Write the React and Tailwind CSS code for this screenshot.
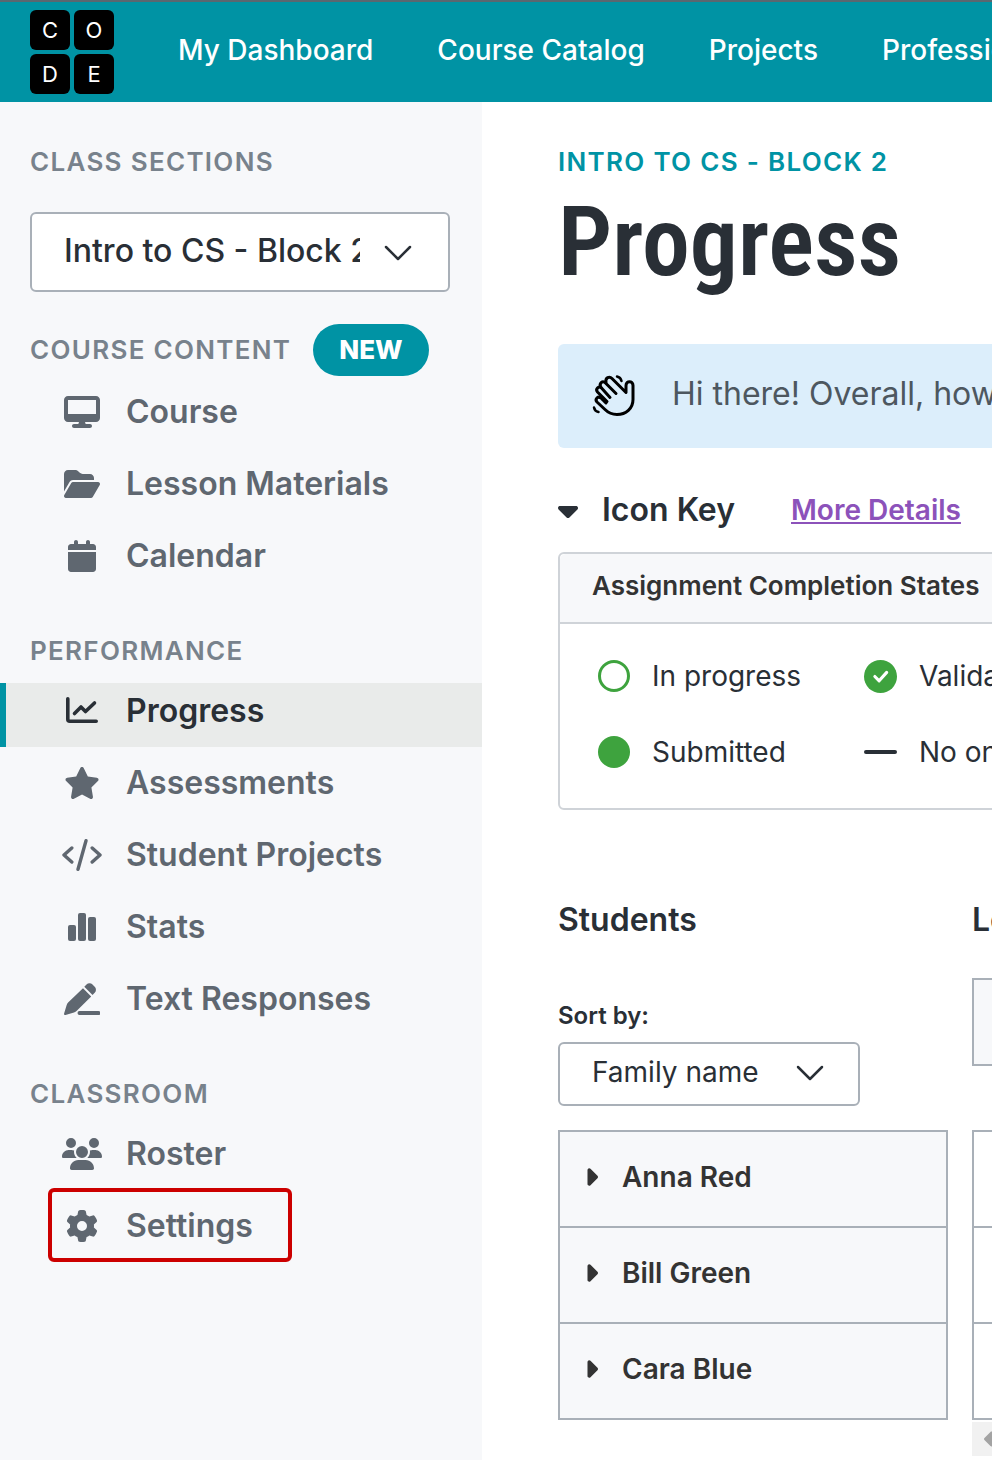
import React from 'react';
import { FaDesktop, FaFolderOpen, FaCalendar, FaStar, FaUsers, FaGear, FaCaretDown, FaCaretRight, FaCaretLeft } from 'react-icons/fa6';

const ChartLineIcon = () => (
  <svg width="32" height="32" viewBox="0 0 32 32" fill="none" stroke="currentColor" strokeWidth="3.6" strokeLinecap="round" strokeLinejoin="round">
    <path d="M1.800 3.800v20.500a2 2 0 0 0 2 2h26.400" />
    <path d="M8.500 18.500l6.500-6.500 4.500 4.500 9-8.500" />
  </svg>
);

const CodeIcon = () => (
  <svg width="40" height="32" viewBox="0 0 40 32" fill="none" stroke="currentColor" strokeWidth="3.4" strokeLinecap="round" strokeLinejoin="round">
    <path d="M9.800 9L2 16l7.800 7M30.200 9L38 16l-7.800 7M24 1.700l-8 28.600" />
  </svg>
);

const StatsIcon = () => (
  <svg width="28" height="28" viewBox="0 0 28 28" fill="currentColor">
    <rect x="0" y="12" width="8" height="16" rx="2" />
    <rect x="10" y="0" width="8" height="28" rx="2" />
    <rect x="20" y="4" width="8" height="24" rx="2" />
  </svg>
);

const PenLineIcon = () => (
  <svg width="36" height="32" viewBox="0 0 36 32" fill="currentColor">
    <path d="M22.500 1.500a4.200 4.200 0 0 1 6 0l2.200 2.200a4.200 4.200 0 0 1 0 6L28.500 12l-8.200-8.200zM19 5.200l8.200 8.200-14.400 14.400a6 6 0 0 1-2.800 1.600L1.500 32A1.300 1.300 0 0 1 .1 30.400l2.500-8.200a6 6 0 0 1 1.500-2.700zM15.500 28H34.500a2 2 0 0 1 0 4H15.500a2 2 0 0 1 0-4z" />
  </svg>
);

const ChevronIcon = () => (
  <svg width="28" height="28" viewBox="0 0 28 28" fill="none" stroke="#292f36" strokeWidth="2.500" strokeLinecap="round" strokeLinejoin="round">
    <path d="M2 9l12 12 12-12" />
  </svg>
);

const WaveIcon = () => (
  <svg width="44" height="44" viewBox="0 -1.500 44 44" fill="none" stroke="#000" strokeWidth="3" strokeLinecap="round" strokeLinejoin="round">
    <path d="M15 28L5.500 18.500c-2.500-3 1.500-6.500 4-4L18 24" />
    <path d="M9 14c-2.500-4 1.500-7.500 4.500-4.500L24 20" />
    <path d="M14 9c-1-5 3.500-6.500 6-4l14 14v-7c0-5 7-5 7 0v14c0 9-7 15-16 15-5 0-9-2-12-5l-8-7.500c-2.500-2.800 1-6.500 4-4l5 5" />
    <path d="M25 3c2.500.5 4 2 4.500 4.500M2 34c.5 2.500 2 4 4.500 4.500" strokeWidth="2.500" />
  </svg>
);

const groups = [
  {
    title: 'Course Content',
    isNew: true,
    items: [
      { label: 'Course', icon: <FaDesktop className="h-8 w-9" /> },
      { label: 'Lesson Materials', icon: <FaFolderOpen className="h-8 w-9" /> },
      { label: 'Calendar', icon: <FaCalendar className="h-8 w-7" /> },
    ],
  },
  {
    title: 'Performance',
    items: [
      { label: 'Progress', icon: <ChartLineIcon />, active: true },
      { label: 'Assessments', icon: <FaStar className="h-8 w-9" /> },
      { label: 'Student Projects', icon: <CodeIcon /> },
      { label: 'Stats', icon: <StatsIcon /> },
      { label: 'Text Responses', icon: <PenLineIcon /> },
    ],
  },
  {
    title: 'Classroom',
    items: [
      { label: 'Roster', icon: <FaUsers className="h-8 w-10" /> },
      { label: 'Settings', icon: <FaGear className="h-8 w-8" />, marked: true },
    ],
  },
];

const students = ['Anna Red', 'Bill Green', 'Cara Blue'];

function Logo() {
  return (
    <a href="#" aria-label="Code" className="grid shrink-0 grid-cols-2 gap-1 text-[22px] leading-10 text-white">
      {['C', 'O', 'D', 'E'].map((letter) => (
        <span key={letter} className="h-10 w-10 rounded-md bg-black text-center">{letter}</span>
      ))}
    </a>
  );
}

function Header() {
  return (
    <header className="flex h-[102px] items-center overflow-hidden border-t-2 border-[#5b6770] bg-[#0093a4] pl-[30px]">
      <Logo />
      <nav className="flex gap-16 pb-1 pl-16 text-[28px] leading-9 font-medium whitespace-nowrap text-white">
        <a href="#">My Dashboard</a>
        <a href="#">Course Catalog</a>
        <a href="#">Projects</a>
        <a href="#">Professional Learning</a>
      </nav>
    </header>
  );
}

function NavItem({ item }) {
  return (
    <li className="relative">
      <a
        href="#"
        className={
          item.active
            ? 'flex h-16 items-center gap-6 border-l-[6px] border-[#0093a4] bg-[#e9ebea] pb-2 pl-14 text-[#292f36]'
            : 'flex h-16 items-center gap-6 pb-2 pl-[62px]'
        }
      >
        <span className="flex w-10 justify-center">{item.icon}</span>
        {item.label}
      </a>
      {item.marked && (
        <span className="pointer-events-none absolute -top-2.5 left-12 h-[74px] w-[244px] rounded-md border-4 border-[#c00]" />
      )}
    </li>
  );
}

function Sidebar() {
  return (
    <aside className="w-[482px] shrink-0 bg-[#f7f8fa] pt-11 pb-[198px]">
      <label htmlFor="section" className="block px-[30px] text-[26px] leading-8 font-semibold tracking-wider text-[#78828c] uppercase">
        Class Sections
      </label>
      <div className="mx-[30px] mt-[34px] mb-8 grid w-[420px] items-center">
        <select
          id="section"
          className="col-start-1 row-start-1 h-20 w-full appearance-none rounded-md border-2 border-[#a9b0b8] bg-white pr-[88px] pb-0.5 pl-8 text-[32px] font-medium text-[#292f36]"
        >
          <option>Intro to CS - Block 2</option>
        </select>
        <span className="pointer-events-none col-start-1 row-start-1 justify-self-end pr-[38px]"><ChevronIcon /></span>
      </div>
      {groups.map((group) => (
        <section key={group.title}>
          <div className={group.isNew ? 'mb-2 flex items-center gap-[22px] px-[30px]' : 'mt-[43px] mb-4 px-[30px]'}>
            <h2 className="text-[26px] leading-8 font-semibold tracking-wider text-[#78828c] uppercase">{group.title}</h2>
            {group.isNew && (
              <span className="rounded-full bg-[#0093a4] px-[26px] text-[26px] leading-[52px] font-extrabold text-white">NEW</span>
            )}
          </div>
          <ul className="flex flex-col gap-2 text-[32px] leading-9 font-semibold text-[#5f6770]">
            {group.items.map((item) => (
              <NavItem key={item.label} item={item} />
            ))}
          </ul>
        </section>
      ))}
    </aside>
  );
}

function IconKey() {
  return (
    <section className="mt-10">
      <div className="flex h-11 items-center">
        <button className="flex items-center gap-6 text-[32px] leading-9 font-semibold">
          <FaCaretDown className="h-8 w-5" />
          Icon Key
        </button>
        <a href="#" className="ml-14 text-[28px] leading-9 font-semibold text-[#8c52ba] underline">More Details</a>
      </div>
      <div className="mt-5 w-[1300px] rounded-md border-2 border-[#cfd3d8]">
        <h3 className="rounded-t-md border-b-2 border-[#cfd3d8] bg-[#f7f8fa] px-8 pt-[14px] pb-[18px] text-[26px] leading-9 font-semibold text-[#333]">
          Assignment Completion States
        </h3>
        <ul className="grid grid-cols-[266px_500px] gap-y-10 px-[38px] pt-[34px] pb-[38px] text-[28px] leading-9">
          <li className="flex items-center gap-[22px]">
            <span className="h-8 w-8 rounded-full border-[3px] border-[#3ea33e]" />
            In progress
          </li>
          <li className="flex items-center gap-[22px]">
            <svg width="33" height="33" viewBox="0 0 32 32" fill="none">
              <circle cx="16" cy="16" r="16" fill="#3ea33e" />
              <path d="M10.500 16l4.200 4.200L22 12" stroke="#fff" strokeWidth="3" strokeLinecap="round" strokeLinejoin="round" />
            </svg>
            Validated
          </li>
          <li className="flex items-center gap-[22px]">
            <span className="h-8 w-8 rounded-full bg-[#3ea33e]" />
            Submitted
          </li>
          <li className="flex items-center gap-[22px]">
            <span className="h-1 w-[33px] rounded-full bg-[#292f36]" />
            No online work
          </li>
        </ul>
      </div>
    </section>
  );
}

function StudentTable() {
  return (
    <section className="mt-[90px] flex gap-6">
      <div className="w-[390px] shrink-0">
        <h2 className="text-[32px] leading-10 font-semibold">Students</h2>
        <label htmlFor="sort" className="mt-[60px] block text-[24px] leading-8 font-semibold">Sort by:</label>
        <div className="mt-2.5 mb-6 grid w-[302px] items-center">
          <select
            id="sort"
            className="col-start-1 row-start-1 h-16 w-full appearance-none rounded-md border-2 border-[#a9b0b8] bg-white pb-1 pl-8 text-[28px]"
          >
            <option>Family name</option>
          </select>
          <span className="pointer-events-none col-start-1 row-start-1 justify-self-end pr-9 pb-1"><ChevronIcon /></span>
        </div>
        <ul className="divide-y-2 divide-[#a9b0b8] border-2 border-[#a9b0b8] bg-[#f7f8fa] text-[28px] leading-9 font-semibold text-[#333]">
          {students.map((name) => (
            <li key={name}>
              <button className="flex h-[94px] w-full items-center gap-6 pb-1 pl-6">
                <FaCaretRight className="h-7 w-[14px]" />
                {name}
              </button>
            </li>
          ))}
        </ul>
      </div>
      <div className="w-[800px] shrink-0">
        <h2 className="text-[32px] leading-10 font-semibold">Lesson</h2>
        <div className="mt-[38px] h-[88px] border-2 border-[#a9b0b8] bg-[#f7f8fa]" />
        <div className="mt-16 divide-y-2 divide-[#a9b0b8] border-2 border-[#a9b0b8]">
          {students.map((name) => (
            <div key={name}>
              <div className="h-[94px]" />
            </div>
          ))}
        </div>
        <div className="mt-0.5 flex h-[34px] items-center bg-[#f1f1f1] pl-3 text-[#a3a3a3]">
          <FaCaretLeft className="h-6 w-3" />
        </div>
      </div>
    </section>
  );
}

export default function App() {
  return (
    <div className="min-h-screen overflow-hidden bg-white font-[Inter,sans-serif] text-[#292f36]">
      <Header />
      <div className="flex">
        <Sidebar />
        <main className="min-w-0 flex-1 overflow-hidden pt-11 pl-[76px]">
          <p className="text-[26px] leading-8 font-semibold tracking-wider text-[#0093a4] uppercase">Intro to CS - Block 2</p>
          <h1 className="mt-2 text-[96px] leading-[112px] font-semibold font-['Liberation_Sans_Narrow','Roboto_Condensed',Roboto,sans-serif]">Progress</h1>
          <div className="mt-[46px] flex h-[104px] w-[1300px] items-center gap-9 rounded-md bg-[#dceefb] pb-1 pl-[34px] text-[32px] leading-9 text-[#4d575f]">
            <WaveIcon />
            Hi there! Overall, how satisfied are you with this page?
          </div>
          <IconKey />
          <StudentTable />
        </main>
      </div>
    </div>
  );
}
